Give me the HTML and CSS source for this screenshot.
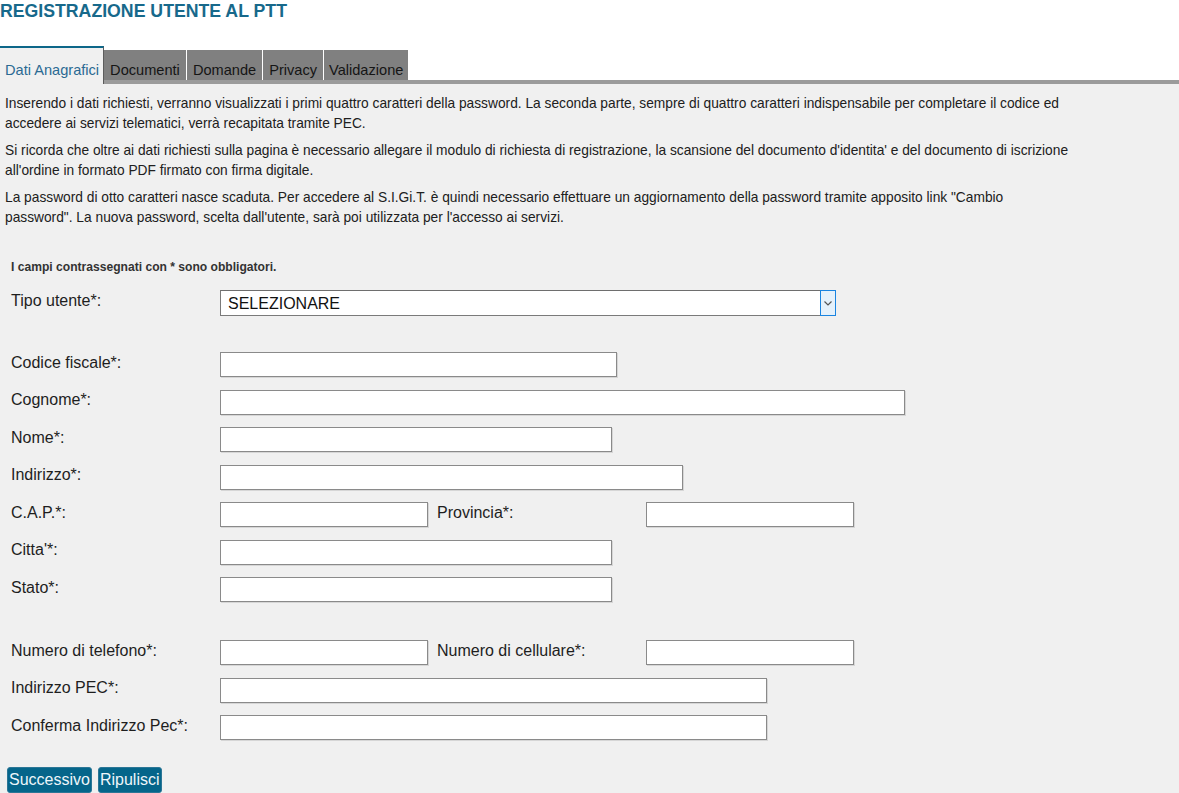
FILE: index.html
```html
<!DOCTYPE html>
<html lang="it">
<head>
<meta charset="utf-8">
<title>Registrazione utente al PTT</title>
<link rel="stylesheet" href="styles.css">
</head>
<body>
<h1 class="title">REGISTRAZIONE UTENTE AL PTT</h1>
<nav class="tabs">
  <span class="tab tab-active">Dati Anagrafici</span>
  <div class="tab-rest">
    <span class="tab">Documenti</span>
    <span class="tab">Domande</span>
    <span class="tab">Privacy</span>
    <span class="tab">Validazione</span>
  </div>
</nav>
<main class="content">
  <div class="intro">
    <p>Inserendo i dati richiesti, verranno visualizzati i primi quattro caratteri della password. La seconda parte, sempre di quattro caratteri indispensabile per completare il codice ed accedere ai servizi telematici, verrà recapitata tramite PEC.</p>
    <p>Si ricorda che oltre ai dati richiesti sulla pagina è necessario allegare il modulo di richiesta di registrazione, la scansione del documento d'identita' e del documento di iscrizione all'ordine in formato PDF firmato con firma digitale.</p>
    <p>La password di otto caratteri nasce scaduta. Per accedere al S.I.Gi.T. è quindi necessario effettuare un aggiornamento della password tramite apposito link "Cambio password". La nuova password, scelta dall'utente, sarà poi utilizzata per l'accesso ai servizi.</p>
  </div>
  <p class="note">I campi contrassegnati con * sono obbligatori.</p>
  <form class="form">
    <div class="row row-select">
      <label class="label">Tipo utente*:</label>
      <div class="select-box">
        <select class="select"><option>SELEZIONARE</option></select>
        <span class="select-arrow"><svg width="8" height="5" viewBox="0 0 8 5"><path d="M0.5 0.5 L4 4 L7.5 0.5" fill="none" stroke="#555" stroke-width="1.2"/></svg></span>
      </div>
    </div>
    <div class="group">
      <div class="row"><label class="label">Codice fiscale*:</label><input class="input w-cf" type="text"></div>
      <div class="row"><label class="label">Cognome*:</label><input class="input w-xl" type="text"></div>
      <div class="row"><label class="label">Nome*:</label><input class="input w-m" type="text"></div>
      <div class="row"><label class="label">Indirizzo*:</label><input class="input w-l" type="text"></div>
      <div class="row"><label class="label">C.A.P.*:</label><input class="input w-s" type="text"><label class="label label-2">Provincia*:</label><input class="input w-s" type="text"></div>
      <div class="row"><label class="label">Citta'*:</label><input class="input w-m" type="text"></div>
      <div class="row"><label class="label">Stato*:</label><input class="input w-m" type="text"></div>
    </div>
    <div class="group group-2">
      <div class="row"><label class="label">Numero di telefono*:</label><input class="input w-s" type="text"><label class="label label-2">Numero di cellulare*:</label><input class="input w-s" type="text"></div>
      <div class="row"><label class="label">Indirizzo PEC*:</label><input class="input w-pec" type="text"></div>
      <div class="row"><label class="label">Conferma Indirizzo Pec*:</label><input class="input w-pec" type="text"></div>
    </div>
    <div class="actions">
      <button type="button" class="btn">Successivo</button>
      <button type="button" class="btn">Ripulisci</button>
    </div>
  </form>
</main>
</body>
</html>
```
FILE: styles.css
```css
html, body {
  margin: 0;
  padding: 0;
  background: #ffffff;
  font-family: "Liberation Sans", Arial, sans-serif;
}
body {
  min-height: 793px;
  display: flex;
  flex-direction: column;
}
.title {
  margin: 1px 0 0 0;
  font-size: 17.7px;
  line-height: 21px;
  font-weight: bold;
  color: #17698b;
}
.tabs {
  display: flex;
  align-items: flex-end;
  margin-top: 24px;
}
.tab {
  font-size: 14.6px;
  line-height: 16px;
  box-sizing: border-box;
}
.tab-active {
  height: 38px;
  border-top: 2px solid #0d6789;
  background: #f0f0f0;
  color: #2b6a93;
  padding: 14px 4px 0 5px;
  border-right: 1px solid #5c5c5c;
}
.tab-rest {
  flex: 1;
  display: flex;
  gap: 1px;
  border-bottom: 4px solid #9b9b9b;
  background: #ffffff;
}
.tab-rest .tab {
  height: 30px;
  padding: 12px 6px 0 6px;
  background: #808080;
  color: #151515;
}
.tab-rest .tab:last-child {
  padding: 12px 5px 0 5px;
}
.content {
  flex: 1;
  background: #f0f0f0;
  padding: 10px 0 0 5px;
}
.intro {
  max-width: 1066px;
}
.intro p {
  margin: 0 0 7px 0;
  font-size: 13.75px;
  line-height: 20px;
  color: #202020;
}
.note {
  margin: 31.5px 0 0 6px;
  font-size: 12.1px;
  line-height: 15px;
  font-weight: bold;
  color: #333333;
}
.form {
  margin: 15.5px 0 0 6px;
  display: flex;
  flex-direction: column;
}
.row {
  display: flex;
  align-items: center;
}
.label {
  width: 209px;
  font-size: 16px;
  color: #1e1e1e;
  position: relative;
  top: -2px;
}
.label-2 {
  width: 209px;
  margin-left: 9px;
}
.select-box {
  box-sizing: border-box;
  display: flex;
  width: 616px;
  height: 26px;
  border: 1px solid #7a7a7a;
  border-top-color: #6e6e6e;
  background: #ffffff;
}
.select {
  flex: 1;
  appearance: none;
  -webkit-appearance: none;
  border: none;
  background: #ffffff;
  font-family: "Liberation Sans", Arial, sans-serif;
  font-size: 16px;
  color: #111;
  padding: 0 0 0 7px;
  outline: none;
  margin: 0;
}
.select-arrow {
  width: 14px;
  margin: -1px -1px -1px 0;
  border: 1px solid #1a84e0;
  background: #e5f1fb;
  display: flex;
  align-items: center;
  justify-content: center;
}
.group {
  margin-top: 36px;
  display: flex;
  flex-direction: column;
  gap: 12.5px;
}
.group-2 {
  margin-top: 38px;
}
.input {
  box-sizing: border-box;
  height: 25px;
  margin: 0;
  border: 1px solid #8a8a8a;
  box-shadow: 1px 1px 0 #d6d6d6;
  background: #ffffff;
  padding: 0 4px;
  font-family: "Liberation Sans", Arial, sans-serif;
  font-size: 14px;
}
.w-cf { width: 397px; }
.w-xl { width: 685px; }
.w-m { width: 392px; }
.w-l { width: 463px; }
.w-s { width: 208px; }
.w-pec { width: 547px; }
.actions {
  margin: 27px 0 0 -4px;
  display: flex;
  gap: 6px;
}
.btn {
  height: 26px;
  padding: 0 1px;
  border: 1px solid #2b7696;
  border-radius: 3px;
  background: #05658a;
  color: #eef6fa;
  font-family: "Liberation Sans", Arial, sans-serif;
  font-size: 16px;
  line-height: 22px;
  cursor: pointer;
}
```
